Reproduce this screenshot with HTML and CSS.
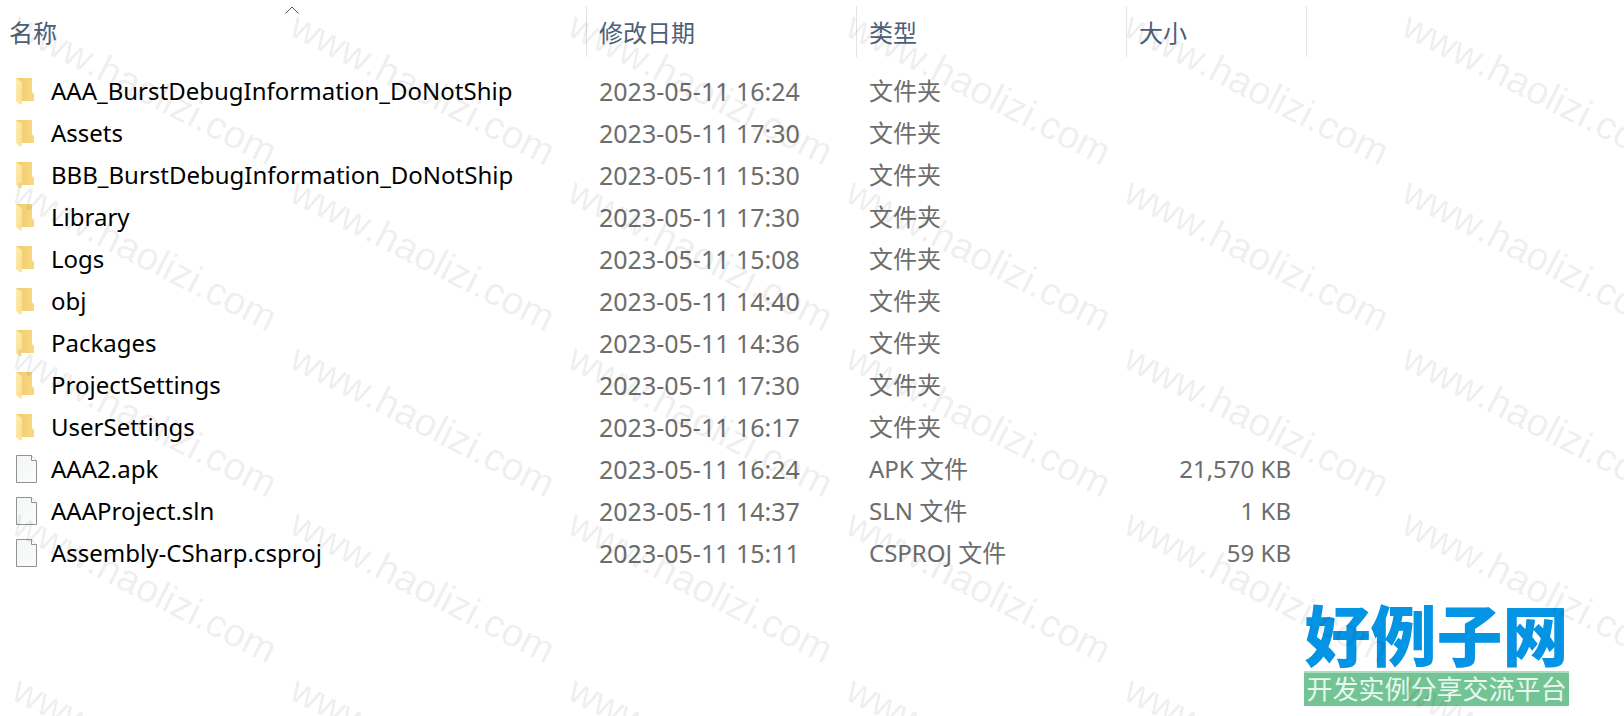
FILE: index.html
```html
<!DOCTYPE html>
<html lang="zh-CN">
<head>
<meta charset="utf-8">
<title>文件列表</title>
<link rel="stylesheet" href="styles.css">
</head>
<body>
<svg class="defs" aria-hidden="true">
  <defs>
    <linearGradient id="flap" x1="0" y1="0" x2="1" y2="1"><stop offset="0" stop-color="#ffedb4"/><stop offset="1" stop-color="#fbdc8b"/></linearGradient>
    <linearGradient id="back" x1="0" y1="0" x2="1" y2="0"><stop offset="0" stop-color="#eecb6c"/><stop offset="1" stop-color="#fad883"/></linearGradient>
    <linearGradient id="paper" x1="0" y1="0" x2="1" y2="1"><stop offset="0" stop-color="#f3f5f6"/><stop offset="1" stop-color="#fbfcfc"/></linearGradient>
    <symbol id="folder" viewBox="0 0 22 28">
      <path d="M0 1H16V15L18 17V24H5L0 22Z" fill="url(#back)"/>
      <path d="M0 1L6 5V24L5 28L0 24Z" fill="url(#flap)"/>
    </symbol>
    <symbol id="file" viewBox="0 0 22 28">
      <path d="M.5 .5H15.500L20.500 6V27.500H.5Z" fill="url(#paper)" stroke="#909294"/>
      <path d="M15.500 .5V5.500H20.500" fill="#fff" stroke="#909294"/>
    </symbol>
  </defs>
</svg>
<main class="explorer">
  <table class="files">
    <colgroup><col class="col-name"><col class="col-date"><col class="col-type"><col class="col-size"></colgroup>
    <thead>
      <tr>
        <th scope="col" aria-sort="ascending"><button type="button">名称</button><svg class="sort" viewBox="0 0 14 8" aria-hidden="true"><path d="M.5 7.500L7 1L13.500 7.500" fill="none" stroke="#555"/></svg></th>
        <th scope="col"><button type="button">修改日期</button></th>
        <th scope="col"><button type="button">类型</button></th>
        <th scope="col"><button type="button">大小</button></th>
      </tr>
    </thead>
    <tbody>
      <tr><td><span class="name"><svg><use href="#folder"/></svg>AAA_BurstDebugInformation_DoNotShip</span></td><td class="date">2023-05-11 16:24</td><td>文件夹</td><td></td></tr>
      <tr><td><span class="name"><svg><use href="#folder"/></svg>Assets</span></td><td class="date">2023-05-11 17:30</td><td>文件夹</td><td></td></tr>
      <tr><td><span class="name"><svg><use href="#folder"/></svg>BBB_BurstDebugInformation_DoNotShip</span></td><td class="date">2023-05-11 15:30</td><td>文件夹</td><td></td></tr>
      <tr><td><span class="name"><svg><use href="#folder"/></svg>Library</span></td><td class="date">2023-05-11 17:30</td><td>文件夹</td><td></td></tr>
      <tr><td><span class="name"><svg><use href="#folder"/></svg>Logs</span></td><td class="date">2023-05-11 15:08</td><td>文件夹</td><td></td></tr>
      <tr><td><span class="name"><svg><use href="#folder"/></svg>obj</span></td><td class="date">2023-05-11 14:40</td><td>文件夹</td><td></td></tr>
      <tr><td><span class="name"><svg><use href="#folder"/></svg>Packages</span></td><td class="date">2023-05-11 14:36</td><td>文件夹</td><td></td></tr>
      <tr><td><span class="name"><svg><use href="#folder"/></svg>ProjectSettings</span></td><td class="date">2023-05-11 17:30</td><td>文件夹</td><td></td></tr>
      <tr><td><span class="name"><svg><use href="#folder"/></svg>UserSettings</span></td><td class="date">2023-05-11 16:17</td><td>文件夹</td><td></td></tr>
      <tr><td><span class="name"><svg><use href="#file"/></svg>AAA2.apk</span></td><td class="date">2023-05-11 16:24</td><td>APK 文件</td><td>21,570 KB</td></tr>
      <tr><td><span class="name"><svg><use href="#file"/></svg>AAAProject.sln</span></td><td class="date">2023-05-11 14:37</td><td>SLN 文件</td><td>1 KB</td></tr>
      <tr><td><span class="name"><svg><use href="#file"/></svg>Assembly-CSharp.csproj</span></td><td class="date">2023-05-11 15:11</td><td>CSPROJ 文件</td><td>59 KB</td></tr>
    </tbody>
  </table>
  <div class="brand">
    <strong>好例子网</strong>
    <span>开发实例分享交流平台</span>
  </div>
  <div class="watermark" aria-hidden="true">
    <span>www.haolizi.com</span><span>www.haolizi.com</span><span>www.haolizi.com</span><span>www.haolizi.com</span><span>www.haolizi.com</span><span>www.haolizi.com</span>
    <span>www.haolizi.com</span><span>www.haolizi.com</span><span>www.haolizi.com</span><span>www.haolizi.com</span><span>www.haolizi.com</span><span>www.haolizi.com</span>
    <span>www.haolizi.com</span><span>www.haolizi.com</span><span>www.haolizi.com</span><span>www.haolizi.com</span><span>www.haolizi.com</span><span>www.haolizi.com</span>
    <span>www.haolizi.com</span><span>www.haolizi.com</span><span>www.haolizi.com</span><span>www.haolizi.com</span><span>www.haolizi.com</span><span>www.haolizi.com</span>
    <span>www.haolizi.com</span><span>www.haolizi.com</span><span>www.haolizi.com</span><span>www.haolizi.com</span><span>www.haolizi.com</span><span>www.haolizi.com</span>
  </div>
</main>
</body>
</html>
```

FILE: styles.css
```css
* {
  box-sizing: border-box;
}

body {
  margin: 0;
  background: #fff;
  color: #6d6d6d;
  font-family: "Noto Sans", "Noto Sans CJK SC", sans-serif;
  font-size: 24px;
}

.defs {
  position: absolute;
  width: 0;
  height: 0;
}

.explorer {
  position: relative;
  min-height: 100vh;
  overflow: hidden;
}

.files {
  table-layout: fixed;
  width: 1307px;
  border-collapse: collapse;
}

.col-name { width: 587px; }
.col-date { width: 270px; }
.col-type { width: 270px; }
.col-size { width: 180px; }

th {
  position: relative;
  height: 70px;
  padding: 6px 0 13px;
  text-align: left;
}

th button {
  display: block;
  width: 100%;
  height: 51px;
  padding: 0 12px;
  border: 0;
  border-right: 1px solid #e3e3e3;
  background: none;
  color: #4c607a;
  font-family: "Noto Sans CJK SC", sans-serif;
  font-size: 24px;
  font-weight: 400;
  line-height: 50px;
  text-align: left;
}

th:first-child button {
  padding-left: 9px;
}

.sort {
  position: absolute;
  top: 6px;
  left: calc(50% - 9px);
  width: 14px;
  height: 8px;
}

td {
  height: 42px;
  padding: 0 12px;
  line-height: 42px;
  white-space: nowrap;
}

td:first-child {
  padding-left: 16px;
  color: #000;
}

td:last-child {
  padding-right: 16px;
  text-align: right;
}

.date {
  font-size: 25px;
}

.name {
  display: flex;
  align-items: center;
  gap: 13px;
}

.name svg {
  width: 22px;
  height: 28px;
}

.brand {
  position: absolute;
  right: 55px;
  bottom: 10px;
  display: flex;
  flex-direction: column;
  gap: 8px;
  width: 265px;
  font-family: "Noto Sans CJK SC", sans-serif;
  text-align: center;
  white-space: nowrap;
}

.brand strong {
  color: #0594e4;
  font-size: 66px;
  font-weight: 900;
  line-height: 62px;
}

.brand span {
  padding-bottom: 4px;
  border-top: 2px solid #addcc0;
  background: #72c494;
  color: #e8f8ee;
  font-size: 26px;
  line-height: 29px;
}

.watermark {
  position: absolute;
  inset: 0;
  display: grid;
  grid-template-columns: repeat(6, 278px);
  grid-auto-rows: 166px;
  padding: 6px 0 0 24px;
  overflow: hidden;
  color: rgba(0, 0, 0, 0.08);
  font-family: "Liberation Sans", Arial, sans-serif;
  font-size: 39px;
  font-kerning: none;
  line-height: 38px;
  pointer-events: none;
}

.watermark span {
  height: 38px;
  transform: rotate(27deg);
  transform-origin: 0 0;
}
```
